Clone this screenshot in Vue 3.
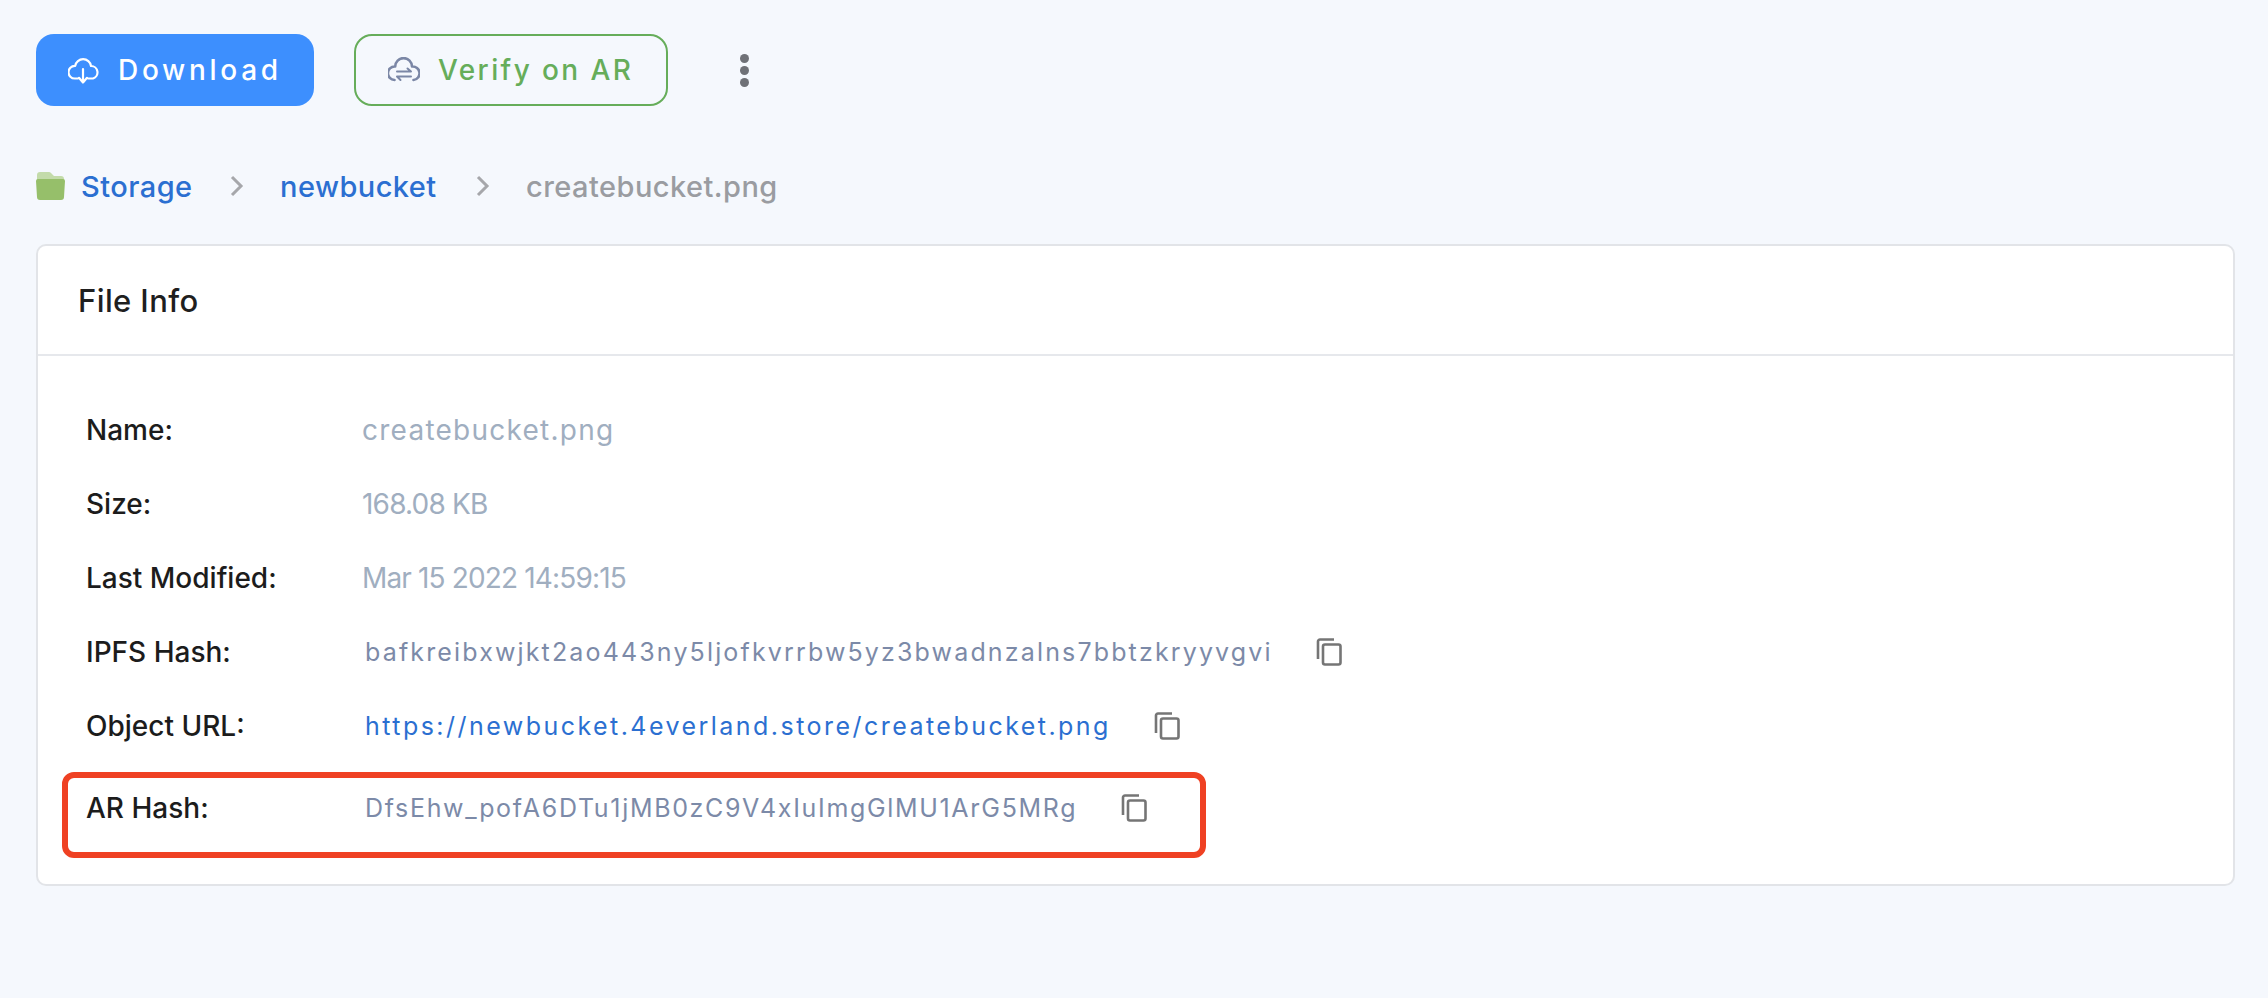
<script setup>
const hashes = {
  ipfs: 'bafkreibxwjkt2ao443ny5ljofkvrrbw5yz3bwadnzalns7bbtzkryyvgvi',
  url: 'https://newbucket.4everland.store/createbucket.png',
  ar: 'DfsEhw_pofA6DTu1jMB0zC9V4xIuImgGlMU1ArG5MRg'
}
</script>

<template>
  <div class="page">
    <div class="actions">
      <button class="btn primary">
        <svg class="cloud" width="32" height="27" viewBox="0 0 32 27" fill="none" stroke="#fff" stroke-width="2.2" stroke-linecap="round" stroke-linejoin="round">
          <path d="M10 21.5H6.8A6.3 6.3 0 0 1 6.8 8.9H7.2A8 8 0 0 1 23 9A6.4 6.4 0 0 1 25 21.5H20" />
          <path d="M15 12V25.5M11 20.8L15 25.5L19 20.8" />
        </svg>
        <span class="btn-text dl">Download</span>
      </button>
      <button class="btn outline">
        <svg class="cloud" width="32" height="26" viewBox="0 0 32 26" fill="none" stroke="#7b87a6" stroke-width="2.6" stroke-linecap="round" stroke-linejoin="round">
          <path d="M6.5 23A6.3 6.3 0 0 1 6.8 9.5H7.2A8.4 8.4 0 0 1 24 9.5A6.4 6.4 0 0 1 25.5 23" />
          <path d="M9 14.5H23L19.5 11.5M23 19.5H9L12.5 23" stroke-width="2" />
        </svg>
        <span class="btn-text vf">Verify on AR</span>
      </button>
      <div class="more"><i></i><i></i><i></i></div>
    </div>

    <nav class="crumbs">
      <svg class="folder" width="29" height="28" viewBox="0 0 29 28">
        <path d="M1 3a3 3 0 0 1 3-3h9a3 3 0 0 1 2 1l3 3h7a3 3 0 0 1 3 3v6H1z" fill="#c3dbaa" />
        <path d="M0 9a2 2 0 0 1 2-2h25a2 2 0 0 1 2 2l-1 16a3 3 0 0 1-3 3H4a3 3 0 0 1-3-3z" fill="#96bf6a" />
      </svg>
      <a class="crumb c1">Storage</a>
      <svg class="chev" width="14" height="22" viewBox="0 0 14 22" fill="none" stroke="#a6a7ab" stroke-width="3"><path d="M2 2l9 9-9 9" /></svg>
      <a class="crumb c2">newbucket</a>
      <svg class="chev" width="14" height="22" viewBox="0 0 14 22" fill="none" stroke="#a6a7ab" stroke-width="3"><path d="M2 2l9 9-9 9" /></svg>
      <span class="crumb current">createbucket.png</span>
    </nav>

    <section class="card">
      <header class="card-head">File Info</header>
      <div class="card-body">
        <div class="row"><span class="label">Name:</span><span class="value v-name">createbucket.png</span></div>
        <div class="row"><span class="label">Size:</span><span class="value v-size">168.08 KB</span></div>
        <div class="row"><span class="label">Last Modified:</span><span class="value v-date">Mar 15 2022 14:59:15</span></div>
        <div class="row">
          <span class="label">IPFS Hash:</span>
          <span class="hash h-ipfs">{{ hashes.ipfs }}</span>
          <svg class="copy" width="26" height="28" viewBox="0 0 26 28" fill="none" stroke="#757575" stroke-width="2.6"><path d="M2 21V3.500A2 2 0 0 1 4 1.500H18" /><rect x="7" y="6.500" width="17.500" height="20" rx="2" /></svg>
        </div>
        <div class="row">
          <span class="label">Object URL:</span>
          <a class="hash link h-url">{{ hashes.url }}</a>
          <svg class="copy" width="26" height="28" viewBox="0 0 26 28" fill="none" stroke="#757575" stroke-width="2.6"><path d="M2 21V3.500A2 2 0 0 1 4 1.500H18" /><rect x="7" y="6.500" width="17.500" height="20" rx="2" /></svg>
        </div>
        <div class="row ar">
          <span class="label">AR Hash:</span>
          <span class="hash h-ar">{{ hashes.ar }}</span>
          <svg class="copy" width="26" height="28" viewBox="0 0 26 28" fill="none" stroke="#757575" stroke-width="2.6"><path d="M2 21V3.500A2 2 0 0 1 4 1.500H18" /><rect x="7" y="6.500" width="17.500" height="20" rx="2" /></svg>
          <div class="annotation"></div>
        </div>
      </div>
    </section>
  </div>
</template>

<style>
html, body { background: #f5f8fd; }
</style>

<style scoped>
.page {
  box-sizing: border-box;
  width: 2268px;
  height: 998px;
  padding: 34px 33px 0 36px;
  background: #f5f8fd;
  font-family: Inter, "Open Sans", sans-serif;
}
.actions {
  display: flex;
  align-items: center;
  height: 72px;
}
.btn {
  box-sizing: border-box;
  display: flex;
  align-items: center;
  height: 72px;
  border-radius: 18px;
  font-family: inherit;
  font-size: 28px;
  font-weight: 450;
  padding: 0;
}
.primary {
  width: 278px;
  background: #3d8ffe;
  border: 0;
  color: #fff;
  padding-left: 32px;
}
.outline {
  width: 314px;
  margin-left: 40px;
  background: transparent;
  border: 2px solid #66ad5a;
  color: #66ad5a;
  padding-left: 32px;
}
.btn-text { margin-left: 18px; }
.dl { letter-spacing: 3.7px; }
.vf { letter-spacing: 2.4px; }
.more {
  display: flex;
  flex-direction: column;
  gap: 3px;
  margin-left: 72px;
}
.more i {
  display: block;
  width: 9px;
  height: 9px;
  border-radius: 50%;
  background: #6f7177;
}
.crumbs {
  display: flex;
  align-items: center;
  height: 30px;
  margin-top: 65px;
  font-size: 29px;
  font-weight: 450;
  letter-spacing: 0.45px;
}
.crumb { white-space: nowrap; }
.c1 { color: #2b6fd1; margin-left: 16px; width: 109px; }
.c2 { color: #2b6fd1; width: 156px; }
.current { color: #9a9ca1; }
.chev { margin: 0 36px 0 40px; }
.card {
  box-sizing: border-box;
  height: 642px;
  margin-top: 43px;
  background: #fff;
  border: 2px solid #e2e4e8;
  border-radius: 10px;
}
.card-head {
  box-sizing: border-box;
  height: 110px;
  padding: 0 0 0 40px;
  display: flex;
  align-items: center;
  border-bottom: 2px solid #e6e8ec;
  font-size: 31px;
  font-weight: 450;
  letter-spacing: 0.4px;
  color: #1f1f1f;
}
.card-body { padding-top: 37px; }
.row {
  position: relative;
  display: flex;
  align-items: center;
  height: 74px;
  padding-left: 48px;
  white-space: nowrap;
}
.label {
  width: 276px;
  flex: none;
  font-size: 28px;
  font-weight: 450;
  color: #1c1c1c;
}
.value { font-size: 28px; color: #a0aec0; }
.v-name { letter-spacing: 1.25px; }
.v-size { letter-spacing: -0.8px; }
.v-date { letter-spacing: -0.85px; }
.hash {
  margin-left: 3px;
  font-size: 25px;
  color: #7c8aa8;
}
.link { color: #2b6fd1; }
.h-ipfs { width: 904px; letter-spacing: 2.15px; }
.h-url { width: 742px; letter-spacing: 2.46px; }
.h-ar { width: 709px; letter-spacing: 1.67px; }
.copy { flex: none; margin-left: 47px; }
.ar { margin-top: 8px; }
.annotation {
  position: absolute;
  left: 24px;
  top: 1px;
  box-sizing: border-box;
  width: 1144px;
  height: 86px;
  border: 6px solid #ef4123;
  border-radius: 12px;
}
</style>
